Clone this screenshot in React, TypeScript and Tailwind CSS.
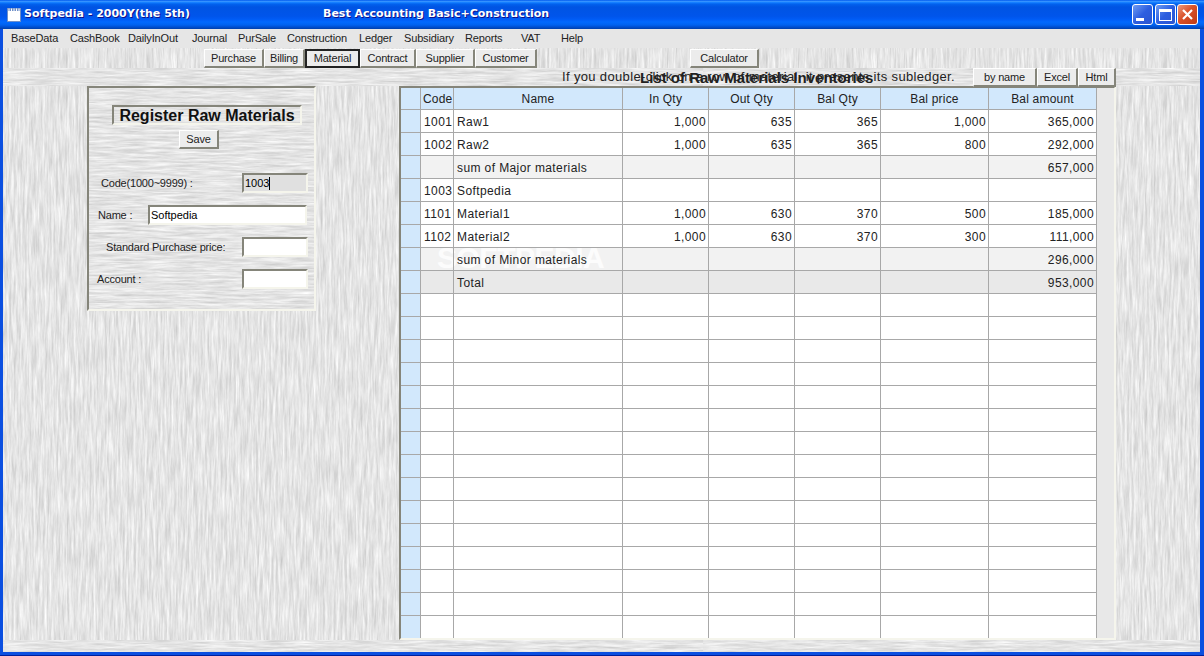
// wood grain textures, svg noise stretched along one axis
const GRAIN_V =
  "bg-[#e4e4e4] bg-[url(data:image/svg+xml,%3Csvg%20xmlns=%22http://www.w3.org/2000/svg%22%20width=%22700%22%20height=%22700%22%3E%3Cfilter%20id=%22n%22%20color-interpolation-filters=%22sRGB%22%3E%3CfeTurbulence%20type=%22fractalNoise%22%20baseFrequency=%220.45%200.035%22%20numOctaves=%224%22%20seed=%224%22/%3E%3CfeColorMatrix%20values=%220.24%200%200%200%200.775%200.24%200%200%200%200.775%200.24%200%200%200%200.775%200%200%200%200%201%22/%3E%3C/filter%3E%3Crect%20width=%22700%22%20height=%22700%22%20filter=%22url%28%23n%29%22/%3E%3C/svg%3E)]";
const GRAIN_H =
  "bg-[#e4e4e4] bg-[url(data:image/svg+xml,%3Csvg%20xmlns=%22http://www.w3.org/2000/svg%22%20width=%22700%22%20height=%22700%22%3E%3Cfilter%20id=%22n%22%20color-interpolation-filters=%22sRGB%22%3E%3CfeTurbulence%20type=%22fractalNoise%22%20baseFrequency=%220.035%200.45%22%20numOctaves=%224%22%20seed=%227%22/%3E%3CfeColorMatrix%20values=%220.24%200%200%200%200.775%200.24%200%200%200%200.775%200.24%200%200%200%200.775%200%200%200%200%201%22/%3E%3C/filter%3E%3Crect%20width=%22700%22%20height=%22700%22%20filter=%22url%28%23n%29%22/%3E%3C/svg%3E)]";
const FONT = "font-['Liberation_Sans',Arial,sans-serif]";
const BTN =
  "flex items-center justify-center bg-[#ececec] text-[11px] tracking-[-0.2px] text-[#222]";
const BEVEL = "border border-t-white border-l-white border-r-2 border-b-2 border-r-[#85857a] border-b-[#85857a]";
const SUNKEN = "border-2 border-t-[#85857a] border-l-[#85857a] border-r-[#f5f5ec] border-b-[#f5f5ec]";
const INPUT = `flex h-[20px] items-center px-[1px] text-[11px] text-black ${SUNKEN}`;
const LABEL = "pt-px text-[11px] tracking-[-0.2px] whitespace-nowrap text-[#222]";

const MENU = [
  { label: "BaseData", w: "w-[59px]" },
  { label: "CashBook", w: "w-[58px]" },
  { label: "DailyInOut", w: "w-[64px]" },
  { label: "Journal", w: "w-[46px]" },
  { label: "PurSale", w: "w-[49px]" },
  { label: "Construction", w: "w-[72px]" },
  { label: "Ledger", w: "w-[45px]" },
  { label: "Subsidiary", w: "w-[61px]" },
  { label: "Reports", w: "w-[56px]" },
  { label: "VAT", w: "w-[40px]" },
  { label: "Help", w: "w-[40px]" },
];

const TOOLS = [
  { label: "Purchase", w: "w-[60px]" },
  { label: "Billing", w: "w-[41px]" },
  { label: "Material", w: "w-[55px]", active: true },
  { label: "Contract", w: "w-[56px]" },
  { label: "Supplier", w: "w-[59px]" },
  { label: "Customer", w: "w-[62px]" },
];

type Row = { cells: string[]; tone?: "sum" | "total" };

const ROWS: Row[] = [
  { cells: ["1001", "Raw1", "1,000", "635", "365", "1,000", "365,000"] },
  { cells: ["1002", "Raw2", "1,000", "635", "365", "800", "292,000"] },
  { cells: ["", "sum of Major materials", "", "", "", "", "657,000"], tone: "sum" },
  { cells: ["1003", "Softpedia", "", "", "", "", ""] },
  { cells: ["1101", "Material1", "1,000", "630", "370", "500", "185,000"] },
  { cells: ["1102", "Material2", "1,000", "630", "370", "300", "111,000"] },
  { cells: ["", "sum of Minor materials", "", "", "", "", "296,000"], tone: "sum" },
  { cells: ["", "Total", "", "", "", "", "953,000"], tone: "total" },
];
for (let i = 0; i < 15; i++) ROWS.push({ cells: ["", "", "", "", "", "", ""] });

const HEADERS = ["Code", "Name", "In Qty", "Out Qty", "Bal Qty", "Bal price", "Bal amount"];
const COLS = "grid w-[696px] grid-cols-[20px_33px_169px_86px_86px_86px_108px_108px]";
const CELL = "relative z-[2] flex items-center overflow-hidden border-r border-b border-[#a8a8a8]";

function WinButton({ children, red }: { children: React.ReactNode; red?: boolean }) {
  return (
    <div
      className={`flex h-[21px] w-[21px] items-center justify-center rounded-[3px] border border-white ${
        red
          ? "bg-[linear-gradient(135deg,#ec9a7c,#d9512a_45%,#bf3a14)]"
          : "bg-[linear-gradient(135deg,#6f9cf2,#2c5ee0_50%,#2a55d0)]"
      }`}
    >
      {children}
    </div>
  );
}

function TitleBar() {
  return (
    <div className="flex h-[29px] shrink-0 items-center bg-[linear-gradient(180deg,#0058ee_0%,#3593ff_5%,#127dff_9%,#0262ee_14%,#0054e3_24%,#0055eb_56%,#005bf5_66%,#026afe_76%,#0062ef_86%,#0052d6_92%,#0040ab_100%)] pr-[6px] pl-[7px] text-white">
      <svg width="14" height="14" viewBox="0 0 14 14" className="mr-[3px]">
        <rect x="0" y="0" width="14" height="14" fill="#6f8fc8" />
        <rect x="1" y="3" width="12" height="10" fill="#fff" />
        <path d="M2 0.5v3M4.5 0.5v3M7 0.5v3M9.5 0.5v3M12 0.5v3" stroke="#fff" strokeWidth="1" />
      </svg>
      <span className="w-[299px] font-['DejaVu_Sans',sans-serif] text-[11px] font-bold whitespace-nowrap [text-shadow:1px_1px_#0f1089]">
        Softpedia - 2000Y(the 5th)
      </span>
      <span className="font-['DejaVu_Sans',sans-serif] text-[11px] font-bold whitespace-nowrap [text-shadow:1px_1px_#0f1089]">
        Best Accounting Basic+Construction
      </span>
      <div className="ml-auto flex gap-[1.5px]">
        <WinButton>
          <div className="mt-[9px] mr-[6px] h-[3px] w-[8px] bg-white" />
        </WinButton>
        <WinButton>
          <div className="h-[12px] w-[13px] border border-t-[3px] border-white" />
        </WinButton>
        <WinButton red>
          <svg width="13" height="13" viewBox="0 0 13 13">
            <path d="M2 2l9 9M11 2l-9 9" stroke="#fff" strokeWidth="2.2" />
          </svg>
        </WinButton>
      </div>
    </div>
  );
}

function Panel() {
  return (
    <div className={`flex h-[225px] w-[229px] shrink-0 flex-col ${SUNKEN} ${GRAIN_H}`}>
      <div
        className={`mt-[17px] ml-[23px] flex h-[20px] w-[190px] items-center justify-center pt-px text-[16px] font-bold text-[#111] ${SUNKEN}`}
      >
        Register Raw Materials
      </div>
      <div className={`mt-[5px] ml-[90px] h-[19px] w-[40px] ${BTN} ${BEVEL}`}>Save</div>
      <div className="mt-[24px] ml-[12px] flex h-[20px] items-center">
        <span className={`w-[141px] ${LABEL}`}>Code(1000~9999) :</span>
        <div className={`w-[66px] bg-[#e0e0e0] ${INPUT}`}>
          1003
          <span className="h-[13px] w-px bg-black" />
        </div>
      </div>
      <div className="mt-[12px] ml-[9px] flex h-[20px] items-center">
        <span className={`w-[50px] ${LABEL}`}>Name :</span>
        <div className={`w-[159px] bg-white ${INPUT}`}>Softpedia</div>
      </div>
      <div className="mt-[12px] ml-[17px] flex h-[20px] items-center">
        <span className={`w-[136px] ${LABEL}`}>Standard Purchase price:</span>
        <div className={`w-[66px] bg-white ${INPUT}`} />
      </div>
      <div className="mt-[12px] ml-[8px] flex h-[20px] items-center">
        <span className={`w-[145px] ${LABEL}`}>Account :</span>
        <div className={`w-[66px] bg-white ${INPUT}`} />
      </div>
    </div>
  );
}

function Table() {
  return (
    <div className="relative ml-[83px] h-[554px] w-[717px] shrink-0 overflow-hidden border-2 border-t-[#85857a] border-l-[#85857a] border-r-[#f5f5ec] border-b-[#f5f5ec] bg-[#e8e8e8] text-[12px] tracking-[0.4px] text-[#222]">
      <div className={`${COLS} h-[22px] bg-[#d2e8fc] tracking-[0.2px]`}>
        <div className={CELL} />
        {HEADERS.map((h, i) => (
          <div key={h} className={`${CELL} ${i === 0 ? "pl-[2px]" : "justify-center"}`}>
            {h}
          </div>
        ))}
      </div>
      {ROWS.map((row, i) => (
        <div
          key={i}
          className={`${COLS} h-[23px] ${
            row.tone === "sum" ? "bg-[#f2f2f2]" : row.tone === "total" ? "bg-[#e9e9e9]" : "bg-white"
          }`}
        >
          <div className={`${CELL} bg-[#d2e8fc]`} />
          {row.cells.map((c, j) => (
            <div key={j} className={`${CELL} pt-px ${j < 2 ? "pl-[3px]" : "justify-end pr-[2px]"}`}>
              {c}
            </div>
          ))}
        </div>
      ))}
      <div className="pointer-events-none absolute top-[155px] left-[36px] z-[1] text-[30px] leading-none font-bold tracking-[-0.5px] whitespace-nowrap text-white/80">
        SOFTPEDIA
      </div>
    </div>
  );
}

export default function App() {
  return (
    <div
      className={`flex h-[656px] w-[1204px] flex-col overflow-hidden border-b border-[#00209c] bg-[#0b4fe0] ${FONT}`}
    >
      <TitleBar />
      <div className="flex flex-1 flex-col overflow-hidden pr-[4px] pb-[3px] pl-[3px]">
        <div className="flex h-[19px] shrink-0 items-center bg-[#e6e6e6] pl-[8px] text-[11px] tracking-[-0.15px] text-[#222]">
          {MENU.map((m) => (
            <span key={m.label} className={`${m.w} shrink-0 whitespace-nowrap`}>
              {m.label}
            </span>
          ))}
        </div>
        <div className={`flex h-[20px] shrink-0 items-start pl-[201px] ${GRAIN_V}`}>
          <div className="mt-px flex">
            {TOOLS.map((t) => (
              <div
                key={t.label}
                className={`h-[19px] ${t.w} ${BTN} ${t.active ? "border-2 border-[#222]" : BEVEL}`}
              >
                {t.label}
              </div>
            ))}
          </div>
          <div className={`mt-px ml-[153px] h-[19px] w-[69px] ${BTN} ${BEVEL}`}>Calculator</div>
        </div>
        <div className={`relative flex h-[18px] shrink-0 justify-end pr-[84px] ${GRAIN_H}`}>
          <span className="absolute top-[-1px] left-[559px] text-[13px] tracking-[0.35px] whitespace-nowrap text-[#222]">
            If you double-click on a row of material, it presents its subledger.
          </span>
          <span className="absolute top-[-1px] left-[637px] text-[15px] font-bold whitespace-nowrap text-[#222]">
            List of Raw Materials Inventories
          </span>
          <div className={`relative z-10 h-[19px] w-[64px] ${BTN} ${BEVEL}`}>by name</div>
          <div className={`relative z-10 h-[19px] w-[41px] ${BTN} ${BEVEL}`}>Excel</div>
          <div className={`relative z-10 h-[19px] w-[38px] ${BTN} ${BEVEL}`}>Html</div>
        </div>
        <div className={`flex h-[554px] shrink-0 pl-[84px] ${GRAIN_V}`}>
          <Panel />
          <Table />
        </div>
        <div className={`flex-1 ${GRAIN_H}`} />
      </div>
    </div>
  );
}
